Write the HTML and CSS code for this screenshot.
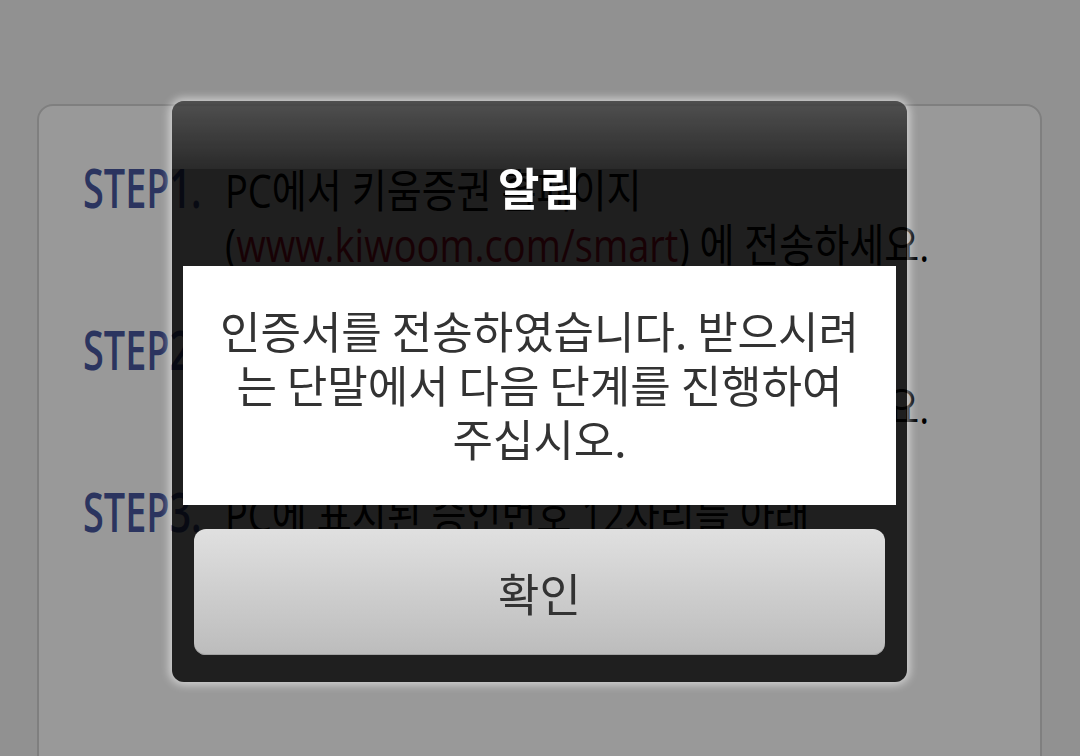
FILE: index.html
```html
<!DOCTYPE HTML>
<html>
<head>
    <meta charset="utf-8">
    <title>인증서 내보내기</title>
    <meta name="viewport" content="width=device-width,initial-scale=1, minimum-scale=1, maximum-scale=1, user-scalable=no"/>
    <link rel="stylesheet" href="styles.css">
</head>

<body>
    <div class="guide-box">
        <div class="step">
            <span class="step-label">STEP1.</span>
            <div class="step-text">
                <p>PC에서 키움증권 홈페이지</p>
                <p>(<span class="link">www.kiwoom.com/smart</span>) 에 전송하세요.</p>
            </div>
        </div>
        <div class="step">
            <span class="step-label">STEP2.</span>
            <div class="step-text">
                <p>스마트폰에서 키움증권 앱을 실행 후</p>
                <p>인증센터에서 인증서 가져오기를 선택하세요.</p>
            </div>
        </div>
        <div class="step">
            <span class="step-label">STEP3.</span>
            <div class="step-text">
                <p>PC에 표시된 승인번호 12자리를 아래</p>
                <p>입력란에 입력하세요.</p>
            </div>
        </div>
    </div>

    <!-- 알림 팝업 -->
    <div class="dim"></div>
    <div class="alert-pop">
        <div class="alert-head">
            <h2 class="alert-title">알림</h2>
        </div>
        <div class="alert-msg">
            <p>인증서를 전송하였습니다. 받으시려<br>는 단말에서 다음 단계를 진행하여<br>주십시오.</p>
        </div>
        <button type="button" class="alert-btn">확인</button>
    </div>
</body>
</html>
```

FILE: styles.css
```css
html, body {
    margin: 0;
    padding: 0;
    height: 100%;
    overflow: hidden;
    background: #f2f2f2;
    font-family: "Noto Sans CJK KR", "Noto Sans", sans-serif;
}

p {
    margin: 0;
}

/*안내 박스*/
.guide-box {
    margin: 104px 38px 0 37px;
    height: 700px;
    box-sizing: border-box;
    padding: 56px 0 0 44px;
    background: #ffffff;
    border: 2px solid #d4d4d4;
    border-radius: 16px;
}
.step {
    display: flex;
    align-items: baseline;
    margin-bottom: 54px;
}
.step-label {
    display: inline-block;
    flex: none;
    width: 142px;
    font-family: "Open Sans", "Noto Sans CJK KR", sans-serif;
    font-size: 54px;
    font-weight: 600;
    line-height: 50px;
    color: #48589f;
    white-space: nowrap;
    transform: scaleX(0.7);
    transform-origin: left;
}
.step-text {
    font-family: "Open Sans", "Noto Sans CJK KR", sans-serif;
    font-size: 45px;
    line-height: 50px;
    color: #000000;
    white-space: nowrap;
    transform: scaleX(0.845);
    transform-origin: left;
}
.step-text p + p {
    margin-top: 4px;
}
.step-text .link {
    color: #c8102e;
}

/*팝업*/
.dim {
    position: fixed;
    top: 0;
    left: 0;
    width: 100%;
    height: 100%;
    background: rgba(0, 0, 0, 0.4);
}
.alert-pop {
    position: absolute;
    left: 172px;
    top: 101px;
    width: 735px;
    height: 581px;
    display: flex;
    flex-direction: column;
    overflow: hidden;
    background: rgba(0, 0, 0, 0.8);
    border-radius: 12px;
    box-shadow: 0 0 8px 3px rgba(255, 255, 255, 0.55);
}
.alert-head {
    position: relative;
    height: 165px;
    flex: none;
    box-sizing: border-box;
    padding-top: 6px;
    display: flex;
    align-items: center;
    justify-content: center;
}
.alert-head:before {
    content: "";
    position: absolute;
    top: 0;
    left: 0;
    right: 0;
    height: 68px;
    background: linear-gradient(rgba(255, 255, 255, 0.22), rgba(255, 255, 255, 0.05));
}
.alert-title {
    position: relative;
    margin: 0;
    font-size: 45px;
    font-weight: 700;
    line-height: 50px;
    color: #ffffff;
}
.alert-msg {
    height: 239px;
    flex: none;
    margin: 0 11px;
    padding-bottom: 4px;
    box-sizing: border-box;
    display: flex;
    align-items: center;
    justify-content: center;
    text-align: center;
    background: #ffffff;
    font-size: 44px;
    line-height: 54px;
    color: #333333;
}
.alert-btn {
    height: 126px;
    flex: none;
    margin: 24px 22px 0;
    padding: 0;
    border: 0;
    border-radius: 12px;
    background: linear-gradient(#e0e0e0, #bcbcbc);
    box-shadow: inset 0 -1px 0 #a2a2a2;
    font-family: "Noto Sans CJK KR", "Noto Sans", sans-serif;
    font-size: 45px;
    color: #333333;
}
```
